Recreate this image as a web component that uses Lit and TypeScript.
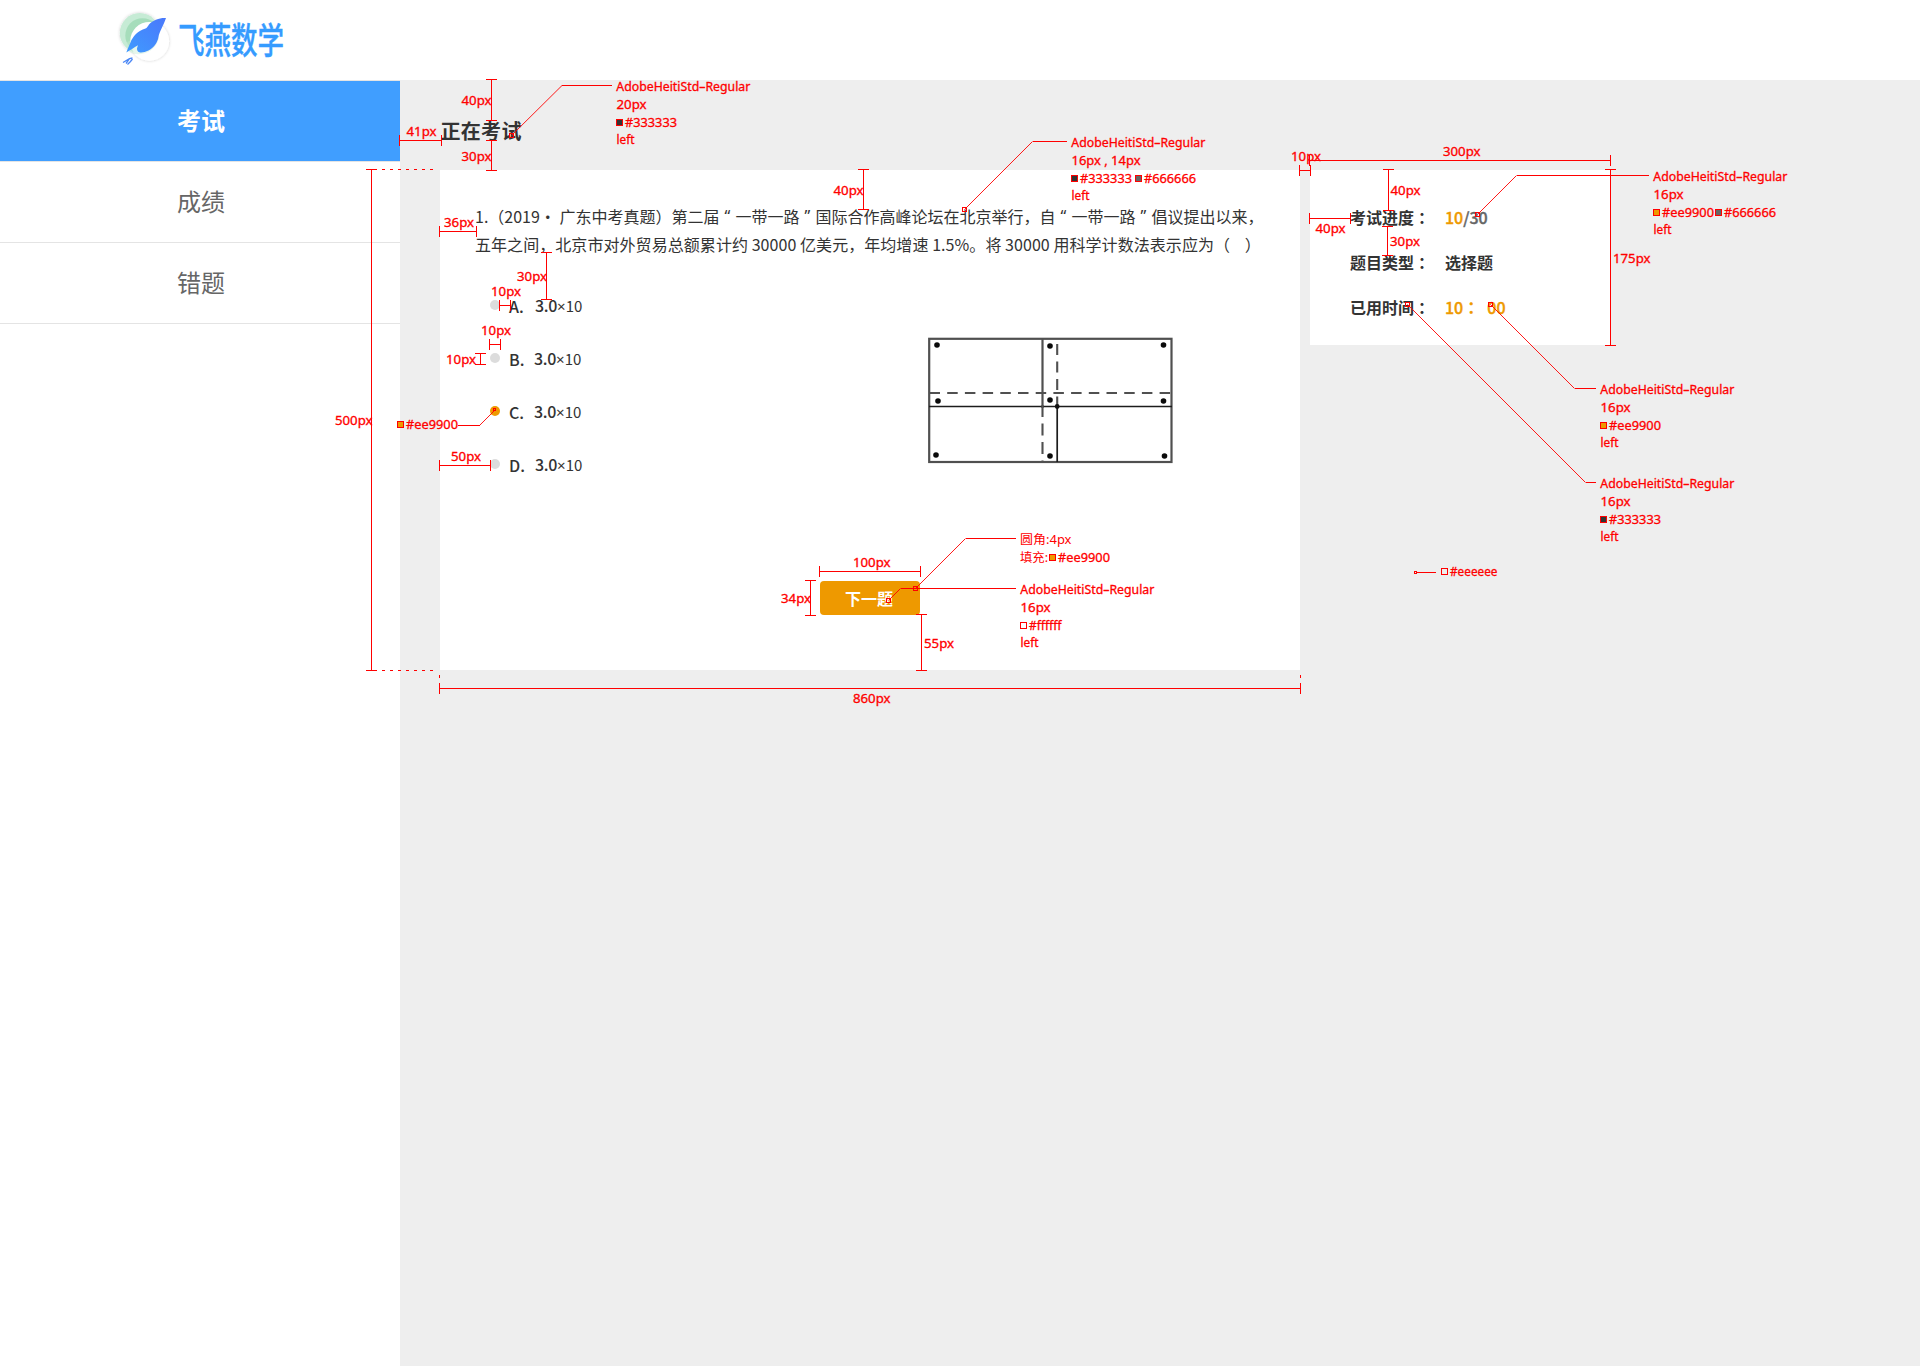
import { LitElement, html, svg, css } from "lit";
import { customElement, property } from "lit/decorators.js";

/** Dimension line with end caps; horizontal when y1 === y2. */
const dim = (x1: number, y1: number, x2: number, y2: number) => {
  const a = x1 + 0.5, b = y1 + 0.5, c = x2 + 0.5, d = y2 + 0.5;
  const path = y1 === y2
    ? `M${a} ${b}H${c}M${a} ${b - 5.5}v11M${c} ${b - 5.5}v11`
    : `M${a} ${b}V${d}M${a - 5.5} ${b}h11M${a - 5.5} ${d}h11`;
  return svg`<path class="rule" d=${path} />`;
};
const label = (x: number, y: number, text: string, w: number, cls = "") =>
  svg`<text class=${cls} x=${x} y=${y} textLength=${w} lengthAdjust="spacingAndGlyphs">${text}</text>`;
const swatch = (x: number, y: number, fill: string) =>
  svg`<rect class="swatch" x=${x + 0.5} y=${y + 0.5} width="6" height="6" fill=${fill} />`;
const anchor = (x: number, y: number, s = 4) =>
  svg`<rect class="swatch" x=${x - s / 2} y=${y - s / 2} width=${s} height=${s} fill="none" />`;
/** Diagonal from the anchor to the elbow, then a level run to endX. */
const leader = (x: number, y: number, ex: number, ey: number, endX: number) => svg`
  <line class="diag" x1=${x} y1=${y} x2=${ex} y2=${ey} />
  <path class="rule" d="M${ex} ${ey}H${endX}" />`;
const fontNote = (x: number, y: number, size: string, sizeW: number, colors: string[]) => svg`
  ${label(x + 0.3, y, "AdobeHeitiStd–Regular", 134)}
  ${label(x + 0.5, y + 18, size, sizeW)}
  ${colors.map((c, i) => {
    const sx = x + i * (colors[0] === "#ee9900" ? 62 : 64);
    return svg`${swatch(sx, y + 28, c)}${label(sx + 9, y + 36, c, c === "#ffffff" ? 32.5 : 52)}`;
  })}
  ${label(x + 0.5, y + 53, "left", 18)}`;

@customElement("spec-overlay")
export class SpecOverlay extends LitElement {
  static styles = css`
    :host { position: absolute; inset: 0; pointer-events: none; }
    svg { display: block; }
    text { font: 12px "Noto Sans", "Noto Sans CJK SC", sans-serif; fill: #f00; stroke: #f00; stroke-width: 0.3px; }
    text.thin { stroke-width: 0; }
    .rule { fill: none; stroke: #f00; stroke-width: 1; shape-rendering: crispEdges; }
    .diag { stroke: #f00; stroke-width: 0.9; }
    .swatch { stroke: #f00; stroke-width: 1; shape-rendering: crispEdges; }
    .dash { fill: none; stroke: #f00; stroke-width: 1; stroke-dasharray: 3 5; shape-rendering: crispEdges; }
  `;
  render() {
    return html`<svg width="1920" height="1366" viewBox="0 0 1920 1366">
      ${dim(491, 79, 491, 120)}${label(461.5, 105, "40px", 30)}
      ${dim(491, 140, 491, 170)}${label(461.5, 161, "30px", 30)}
      ${dim(399, 140, 441, 140)}${label(406.5, 136, "41px", 30)}
      ${leader(511.5, 135.5, 562, 85.5, 612)}${anchor(511.5, 135.5)}
      ${fontNote(616, 91, "20px", 30, ["#333333"])}

      ${dim(439, 231, 476, 231)}${label(444, 227, "36px", 30)}
      ${dim(546, 252, 546, 299)}${label(517, 281, "30px", 30)}
      ${dim(499, 305, 510, 305)}${label(491, 296, "10px", 30)}
      ${dim(489, 344, 500, 344)}${label(481, 335, "10px", 30)}
      ${dim(480, 353, 480, 364)}${label(446, 364, "10px", 30)}
      ${swatch(397, 421, "#ee9900")}${label(406, 429, "#ee9900", 52)}
      <line class="diag" x1="479.5" y1="425.5" x2="494" y2="411" />
      <path class="rule" d="M458 425.5H479.5" />${anchor(494.5, 409.5, 2)}
      ${dim(439, 465, 490, 465)}${label(451, 461, "50px", 30)}
      ${dim(371, 169, 371, 670)}${label(335, 425, "500px", 37.5)}
      <path class="dash" d="M382 169.5H434M382 670.5H434" />
      ${dim(439, 688, 1300, 688)}${label(853, 703, "860px", 37.5)}
      <path class="dash" d="M439.5 675V683M1300.5 675V683" />

      ${dim(863, 169, 863, 209)}${label(833.5, 195, "40px", 30)}
      ${leader(964.5, 209.5, 1032.5, 141.5, 1067)}${anchor(964.5, 209.5)}
      ${fontNote(1071, 147, "16px , 14px", 69, ["#333333", "#666666"])}

      ${dim(1299, 170, 1310, 170)}${label(1291, 161, "10px", 30)}
      ${dim(1309, 160, 1610, 160)}${label(1443, 156, "300px", 37.5)}
      ${dim(1388, 169, 1388, 210)}${label(1390.5, 195, "40px", 30)}
      ${dim(1309, 218, 1350, 218)}${label(1315.5, 233, "40px", 30)}
      ${dim(1387, 226, 1387, 255)}${label(1390, 246, "30px", 30)}
      ${dim(1610, 169, 1610, 345)}${label(1613, 263, "175px", 37.5)}
      ${leader(1477.5, 214.5, 1516.5, 175.5, 1649)}${anchor(1477.5, 214.5)}
      ${fontNote(1653, 181, "16px", 30, ["#ee9900", "#666666"])}
      ${leader(1490.5, 304.5, 1574.5, 388.5, 1596)}${anchor(1490.5, 304.5)}
      ${fontNote(1600, 394, "16px", 30, ["#ee9900"])}
      ${leader(1407.5, 304.5, 1585.5, 482.5, 1596)}${anchor(1407.5, 304.5)}
      ${fontNote(1600, 488, "16px", 30, ["#333333"])}
      ${anchor(1415.5, 572.5, 2)}<path class="rule" d="M1417 572.5H1436" />
      ${swatch(1441, 568, "#eeeeee")}${label(1450, 576, "#eeeeee", 47.5)}

      ${dim(819, 571, 920, 571)}${label(853, 567, "100px", 37.5)}
      ${dim(810, 580, 810, 615)}${label(781, 603, "34px", 30)}
      ${dim(921, 614, 921, 670)}${label(924, 648, "55px", 30)}
      ${leader(915.5, 588.5, 965.5, 538.5, 1016)}${anchor(915.5, 588.5)}
      ${leader(888.5, 600.5, 900.5, 588.5, 1016)}${anchor(888.5, 600.5)}
      ${label(1020, 544, "圆角:4px", 51.5, "thin")}
      ${label(1020, 562, "填充:", 28, "thin")}${swatch(1049, 554, "#ee9900")}${label(1058, 562, "#ee9900", 52)}
      ${fontNote(1020, 594, "16px", 30, ["#ffffff"])}
    </svg>`;
  }
}

@customElement("brand-logo")
export class BrandLogo extends LitElement {
  static styles = css`
    :host { display: block; }
    svg { display: block; overflow: visible; }
    text { font: 500 36px "Noto Sans CJK SC", sans-serif; fill: #359bff; stroke: #359bff; stroke-width: 0.4px; }
  `;
  render() {
    return html`<svg width="180" height="80" viewBox="0 0 180 80">
      <defs>
        <linearGradient id="wing" x1="0" y1="1" x2="1" y2="0">
          <stop offset="0" stop-color="#3f9bff" /><stop offset="1" stop-color="#4a78fb" />
        </linearGradient>
        <filter id="soft" x="-20%" y="-20%" width="140%" height="140%">
          <feDropShadow dx="0" dy="0" stdDeviation="1.4" flood-color="#000" flood-opacity="0.2" />
        </filter>
        <clipPath id="ring"><circle cx="22.700" cy="33" r="19.900" /></clipPath>
      </defs>
      <g filter="url(#soft)">
        <circle cx="32.500" cy="41.200" r="19.600" fill="#fff" />
        <circle cx="22.700" cy="33" r="19.900" fill="#c6ebd5" />
      </g>
      <g clip-path="url(#ring)"><circle cx="25.500" cy="35.500" r="17.200" fill="#a6ddbb" /></g>
      <circle cx="32.500" cy="41.200" r="19.300" fill="#fff" />
      <path d="M9 43Q10 56 24 54Q38 52 42 38L30 30Z" fill="#c6ebd5" opacity="0.450" />
      <path d="M49 18C43 17.500 36 20 32 24.500C30.500 26.500 30 28 28.500 28.600C21 30.500 15.500 37 13.500 42.500C11.500 47 10.500 49.500 9.300 52.500C13 50.500 17 47.500 21 45.300C19.800 48 19.500 50 21 51.500C22.500 53 27 52.800 31.500 50.500C37.500 47.500 40.500 42 41.500 37C42.200 32 46.500 25.500 49 18Z" fill="url(#wing)" />
      <path d="M15.500 58L12.500 58.700L6 62.500M15.500 59L13.500 61.500L10.500 64.500M12.500 58.700L9 63.500" fill="none" stroke="#4a86f5" stroke-width="1.300" />
      <text x="61" y="53.500" textLength="106" lengthAdjust="spacingAndGlyphs">飞燕数学</text>
    </svg>`;
  }
}

@customElement("fold-diagram")
export class FoldDiagram extends LitElement {
  static styles = css`
    :host { display: block; }
    svg { display: block; }
    .edge { fill: none; stroke: #505050; stroke-width: 2.2; }
    .line { fill: none; stroke: #1c1c1c; stroke-width: 1.7; }
    .hidden { fill: none; stroke: #505050; stroke-width: 2.1; }
  `;
  render() {
    const dots = [[27, 25], [140, 26], [253.5, 25], [28, 81], [140, 80], [253.5, 81], [26, 135], [140, 136], [254.5, 136]];
    return html`<svg width="280" height="160" viewBox="0 0 280 160">
      <rect class="edge" x="19.200" y="18.800" width="242.300" height="123.200" />
      <path class="edge" d="M132.500 18.500V88" />
      <path class="line" d="M19 86.500H262M147.200 86V142" />
      <path class="hidden" d="M19.500 73H262" stroke-dasharray="10.500 7.200" />
      <path class="hidden" d="M147.200 24V86" stroke-dasharray="11 6.500" />
      <path class="hidden" d="M132.500 85V142" stroke-dasharray="12 6.500" />
      <circle cx="147.200" cy="86.500" r="2.400" fill="#111" />
      ${dots.map(([x, y]) => svg`<circle cx=${x} cy=${y} r="2.800" fill="#0a0a0a" />`)}
    </svg>`;
  }
}

@customElement("exam-option")
export class ExamOption extends LitElement {
  @property() letter = "";
  @property({ type: Boolean }) selected = false;
  static styles = css`
    :host { display: flex; align-items: center; height: 53px; }
    .dot { width: 10px; height: 10px; border-radius: 50%; background: #dcdcdc; margin-right: 9px; }
    .dot.on { background: #ee9900; }
    .letter { width: 26px; font-weight: 500; padding-top: 2px; }
    .letter.narrow { width: 25px; }
    .value { font-weight: 500; letter-spacing: -0.3px; padding-top: 2px; }
    .power { font-weight: 400; font-size: 15px; letter-spacing: 0; }
    .times { font-family: "Noto Sans", sans-serif; font-size: 15px; }
  `;
  render() {
    const narrow = this.letter === "B" || this.letter === "C";
    return html`<span class="dot ${this.selected ? "on" : ""}"></span>
      <span class="letter ${narrow ? "narrow" : ""}">${this.letter}.</span><span class="value">3.0<span class="power"><span class="times">×</span>10</span></span>`;
  }
}

@customElement("app-root")
export class AppRoot extends LitElement {
  static styles = css`
    :host { display: block; position: relative; width: 1920px; height: 1366px; overflow: hidden;
      background: #fff; color: #333; font: 16px/28px "Noto Sans CJK SC", sans-serif; }
    .page { display: flex; flex-direction: column; height: 100%; }
    .header { height: 80px; box-sizing: border-box; padding-left: 117px; background: #fff; }
    .body { display: flex; flex: 1; }
    .nav { width: 400px; background: #fff; border-top: 1px solid #e4e4e4; box-sizing: border-box; }
    .item { display: flex; align-items: center; justify-content: center; height: 80px; box-sizing: content-box;
      border-bottom: 1px solid #e4e4e4; font-size: 24px; color: #666; line-height: 78px; }
    .item span { padding: 0 0 2px 2px; }
    .item.active { background: #409eff; background-clip: padding-box; color: #fff; font-weight: 700; }
    .main { flex: 1; background: #eee; padding: 37px 0 0 40px; }
    .title { margin: 0 0 25px 0.5px; height: 28px; font-size: 20px; line-height: 28px; font-weight: 700; letter-spacing: 0.3px; }
    .cards { display: flex; align-items: flex-start; gap: 10px; }
    .exam { display: flex; flex-direction: column; width: 860px; height: 500px; background: #fff; box-sizing: border-box; padding: 32px 35px 55px; }
    .question { white-space: pre; }
    .question div { height: 28px; }
    .question .second { letter-spacing: 0.06px; }
    .open, .close { display: inline-block; box-sizing: border-box; width: 16px; height: 28px; vertical-align: top; font-family: "Noto Sans", sans-serif; }
    .open { padding-left: 5px; }
    .close { padding-left: 5px; }
    .work { display: flex; flex: 1; margin-top: 20px; padding-left: 15px; }
    .options { width: 420px; }
    .button { align-self: center; width: 100px; height: 34px; border: 0; border-radius: 4px; background: #e90; color: #fff;
      font: 700 16px/34px "Noto Sans CJK SC", sans-serif; padding: 0 2px 0 0; }
    .figure { padding-top: 42px; }
    .status { width: 300px; height: 175px; background: #fff; box-sizing: border-box; padding: 25px 0 0 40px; font-weight: 700; }
    .row { display: flex; height: 45px; line-height: 45px; }
    .key { width: 95px; white-space: nowrap; }
    .colon { font-family: "Noto Sans CJK TC", sans-serif; }
    .value { font-weight: 500; white-space: pre; }
    .digits { -webkit-text-stroke: 0.4px; }
    .strong { font-weight: 700; }
    .orange { color: #e90; }
    .total { color: #666; }
    .seconds { margin-left: 8px; }
  `;
  render() {
    const road = html`<span class="open">“</span>一带一路<span class="close">”</span>`;
    const colon = html`<span class="colon" lang="zh-Hant">：</span>`;
    return html`
      <div class="page">
        <header class="header"><brand-logo></brand-logo></header>
        <div class="body">
          <nav class="nav">
            <div class="item active"><span>考试</span></div>
            <div class="item"><span>成绩</span></div>
            <div class="item"><span>错题</span></div>
          </nav>
          <main class="main">
            <div class="title">正在考试</div>
            <div class="cards">
              <section class="exam">
                <div class="question"><div>1.（2019• 广东中考真题）第二届${road}国际合作高峰论坛在北京举行，自${road}倡议提出以来，</div><div class="second">五年之间，北京市对外贸易总额累计约 30000 亿美元，年均增速 1.5%。将 30000 用科学计数法表示应为（    ）</div></div>
                <div class="work">
                  <div class="options">
                    <exam-option letter="A"></exam-option>
                    <exam-option letter="B"></exam-option>
                    <exam-option letter="C" selected></exam-option>
                    <exam-option letter="D"></exam-option>
                  </div>
                  <fold-diagram class="figure"></fold-diagram>
                </div>
                <button class="button">下一题</button>
              </section>
              <aside class="status">
                <div class="row"><span class="key">考试进度${colon}</span><span class="value digits"><span class="orange">10</span><span class="total">/30</span></span></div>
                <div class="row"><span class="key">题目类型${colon}</span><span class="value strong">选择题</span></div>
                <div class="row"><span class="key">已用时间${colon}</span><span class="value digits orange">10${colon}<span class="seconds">00</span></span></div>
              </aside>
            </div>
          </main>
        </div>
      </div>
      <spec-overlay></spec-overlay>`;
  }
}
